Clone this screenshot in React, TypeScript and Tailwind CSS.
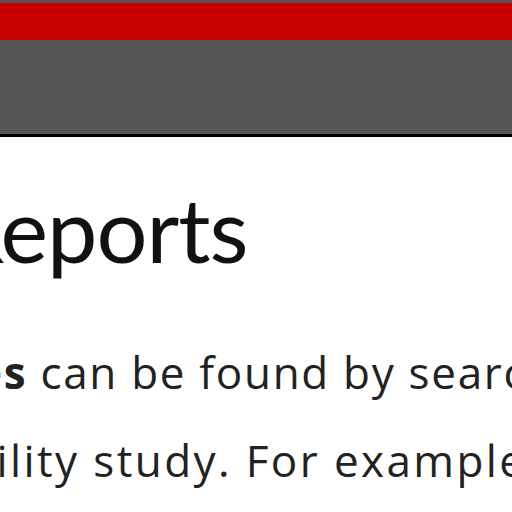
export default function App() {
    return (
        <div className="w-[512px] h-[512px] overflow-hidden bg-white">
            {/* Top bars */}
            <div className="h-[3px] bg-[#555555]" />
            <div className="h-[37px] bg-[#c80000]" />
            <div className="h-[97px] bg-[#555555] border-b-[3px] border-black" />

            {/* Content */}
            <div className="overflow-hidden">
                <h1 className="mt-[46px] ml-[-52px] whitespace-nowrap font-['Lato',sans-serif] text-[90px] leading-none tracking-[-1px] font-normal text-[#111]">
                    Reports
                </h1>
                <div className="font-['Open_Sans',sans-serif] text-[44px] leading-[88px] text-[#222] whitespace-nowrap">
                    <p className="mt-[55px] ml-[-146px] tracking-[1.7px]">
                        <b>Studies</b> can be found by searching
                    </p>
                    <p className="ml-[-194px] tracking-[2.4px]">accessibility study. For example, the</p>
                </div>
            </div>
        </div>
    );
}
